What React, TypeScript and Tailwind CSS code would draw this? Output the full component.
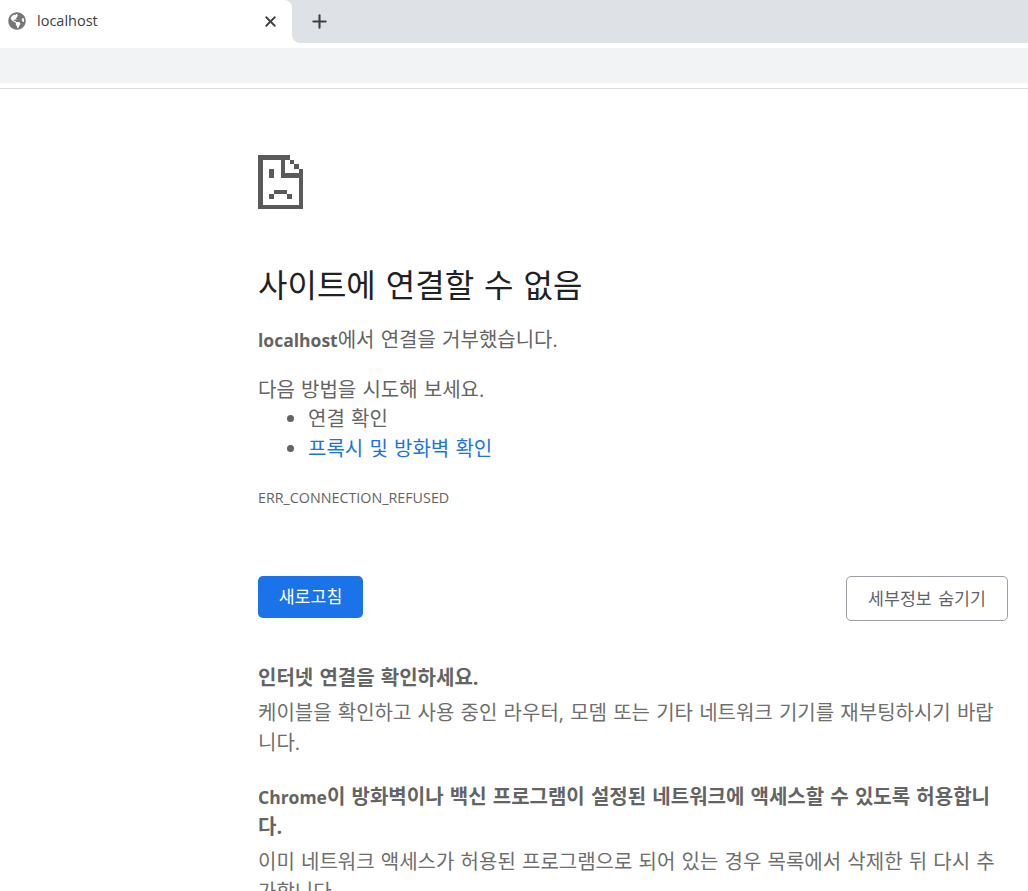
import { FaGlobeAmericas } from 'react-icons/fa';
import { Plus, X } from 'lucide-react';

const font = "font-['Open_Sans','Noto_Sans_CJK_KR',sans-serif]";

function SadTab() {
  return (
    <svg width="45" height="54" viewBox="0 0 20 24" fill="#5a5a5a" shapeRendering="crispEdges">
      <path d="M0 0h14v2H0zM0 0h2v24H0zM0 22h20v2H0zM18 6h2v18h-2zM10 2h2v8h-2zM10 8h10v2H10zM14 2h2v2h-2zM16 4h2v2h-2z" />
      <path d="M5 6h2v4H5zM7 15.5h6v2H7zM5 17.5h2v2H5zM13 17.5h2v2h-2z" />
    </svg>
  );
}

function Browser() {
  return (
    <div>
      <div className="flex h-12 bg-white">
        <div className="w-[292px] bg-[#dee1e6]">
          <div className="flex h-12 items-start rounded-tr-lg bg-white pt-[12px] pl-2">
            <FaGlobeAmericas className="text-[#757575]" size={18} />
            <span className="ml-[11px] text-[14.5px] leading-[18px] text-[#3c4043]">localhost</span>
            <X className="ml-auto mr-[13px] mt-[1px] text-[#3c4043]" size={17} strokeWidth={2.6} />
          </div>
        </div>
        <div className="h-[43px] flex-1 rounded-bl-lg bg-[#dee1e6] pl-[17px] pt-[11px]">
          <Plus className="text-[#3c4043]" size={21} strokeWidth={2.4} />
        </div>
      </div>
      <div className="h-[35px] bg-[#f1f3f4]" />
      <div className="h-[6px] border-b border-[#d9dbdd] bg-white" />
    </div>
  );
}

export default function App() {
  return (
    <div className={`h-[891px] overflow-hidden bg-white ${font}`}>
      <Browser />
      <main className="w-full pl-[258px] pr-5 text-[20px] leading-[29.5px] text-[#646464] [word-spacing:1px]">
        <div className="pt-[66px]">
          <SadTab />
        </div>
        <h1 className="mt-[53px] text-[32px] leading-[46px] text-[#202124] [word-spacing:1.7px]">사이트에 연결할 수 없음</h1>
        <p className="mt-[17px]">
          <strong className="text-[17.5px]">localhost</strong>에서 연결을 거부했습니다.
        </p>
        <p className="mt-[19px]">다음 방법을 시도해 보세요.</p>
        <ul className="list-disc pl-[50px]">
          <li>연결 확인</li>
          <li>
            <span className="text-[#1a73e8]">프록시 및 방화벽 확인</span>
          </li>
        </ul>
        <div className="mt-[25px] text-[14.3px] leading-[20px]">ERR_CONNECTION_REFUSED</div>
        <div className="mt-[68px] flex items-start justify-between">
          <button className="h-[42px] w-[105px] rounded-[5px] bg-[#1a73e8] text-[17.3px] text-white">새로고침</button>
          <button className="h-[45px] w-[162px] rounded-[5px] border border-[#9aa0a6] text-[17.3px] text-[#5f6368] [word-spacing:2px]">세부정보 숨기기</button>
        </div>
        <div className="mt-[42px]">
          <p className="font-bold">인터넷 연결을 확인하세요.</p>
          <p className="mt-[5px] leading-[30px] text-[#6e6e6e]">케이블을 확인하고 사용 중인 라우터, 모뎀 또는 기타 네트워크 기기를 재부팅하시기 바랍니다.</p>
        </div>
        <div className="mt-[24px]">
          <p className="font-bold leading-[30px]">
            <span className="text-[17.5px]">Chrome</span>이 방화벽이나 백신 프로그램이 설정된 네트워크에 액세스할 수 있도록 허용합니다.
          </p>
          <p className="mt-[5px] leading-[30px] text-[#6e6e6e]">이미 네트워크 액세스가 허용된 프로그램으로 되어 있는 경우 목록에서 삭제한 뒤 다시 추가합니다.</p>
        </div>
      </main>
    </div>
  );
}
